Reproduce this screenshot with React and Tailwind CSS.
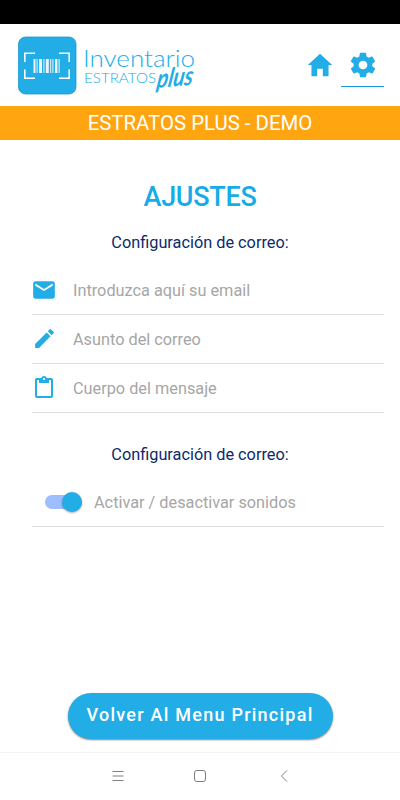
import { useState } from 'react';
import { IoMdHome, IoMdSettings } from 'react-icons/io';
import { MdContentPaste, MdEdit, MdEmail } from 'react-icons/md';

const FIELDS = [
  { name: 'email', placeholder: 'Introduzca aquí su email', icon: MdEmail, iconClass: 'h-[26px] w-[26px]' },
  { name: 'subject', placeholder: 'Asunto del correo', icon: MdEdit, iconClass: 'h-[25px] w-[25px]' },
  { name: 'body', placeholder: 'Cuerpo del mensaje', icon: MdContentPaste, iconClass: 'h-6 w-6' },
];

// x offset and width of each bar
const BARS = [
  [33.5, 2],
  [36.6, 1],
  [39, 3],
  [43.4, 1],
  [45.8, 3],
  [50.2, 1],
  [52.4, 1],
  [55, 2.4],
  [58.6, 1],
];

function Logo() {
  return (
    <svg width="200" height="80" viewBox="0 26 200 80" className="block overflow-visible">
      <rect x="18.5" y="37" width="57.5" height="57" rx="7" fill="#22ade6" stroke="#1c9bd0" strokeWidth="0.8" />
      <g fill="none" stroke="#fff" strokeWidth="1.6">
        <path d="M24.8 62V53.2H35" />
        <path d="M59 53.2H69.2V62" />
        <path d="M24.8 69.5V78.2H35" />
        <path d="M59 78.2H69.2V69.5" />
      </g>
      {BARS.map(([x, width]) => (
        <rect key={x} x={x} y="59" width={width} height="14" fill="#fff" fillOpacity="0.9" />
      ))}
      <g fill="#22ade6">
        <text x="83" y="66.5" fontSize="23" fontWeight="300" textLength="112" lengthAdjust="spacingAndGlyphs" className="font-['Lato',sans-serif]">
          Inventario
        </text>
        <text x="84" y="82.8" fontSize="13.2" fontWeight="300" textLength="72" lengthAdjust="spacingAndGlyphs" className="font-['Lato',sans-serif]">
          ESTRATOS
        </text>
        <text
          fontSize="26"
          fontWeight="700"
          fontStyle="italic"
          textLength="36"
          lengthAdjust="spacingAndGlyphs"
          transform="translate(156 88) rotate(-5) skewX(-14)"
          className="font-['Lato',sans-serif]"
        >
          plus
        </text>
      </g>
    </svg>
  );
}

function Field({ name, placeholder, icon: Icon, iconClass }) {
  return (
    <label className="flex h-[49px] items-center border-b border-[#dedede]">
      <span className="-ml-px flex w-[42px] shrink-0 pb-px">
        <span className="flex w-[26px] justify-center">
          <Icon className={`shrink-0 text-[#22ade6] ${iconClass}`} />
        </span>
      </span>
      <input
        name={name}
        placeholder={placeholder}
        className="w-full min-w-0 bg-transparent pt-0.5 text-[16.3px] text-[#555] outline-none placeholder:text-[#a6a6a6]"
      />
    </label>
  );
}

function SectionTitle({ children }) {
  return <h2 className="text-center text-[16.3px] leading-6 text-[#0b2a6b]">{children}</h2>;
}

export default function App() {
  const [sounds, setSounds] = useState(true);

  return (
    <div className="flex h-[800px] w-[400px] flex-col overflow-hidden bg-white font-['Roboto',sans-serif]">
      <div className="h-6 shrink-0 bg-black" />

      <header className="flex h-[82px] shrink-0 items-start justify-between pr-4 pt-0.5">
        <Logo />
        <nav className="flex">
          <button type="button" aria-label="Inicio" className="flex h-[61px] w-[43px] items-center justify-center pt-4">
            <IoMdHome className="h-[30px] w-[30px] text-[#22ade6]" />
          </button>
          <button
            type="button"
            aria-label="Ajustes"
            className="flex h-[61px] w-[43px] items-center justify-center border-b border-[#1b95dc] pt-[17px]"
          >
            <IoMdSettings className="h-[30px] w-[30px] text-[#22ade6]" />
          </button>
        </nav>
      </header>

      <div className="flex h-[34px] shrink-0 items-center justify-center bg-[#ffa510] text-[20.4px] text-white">
        ESTRATOS PLUS - DEMO
      </div>

      <main className="flex flex-1 flex-col">
        <h1 className="mt-10 text-center text-[27px] font-medium leading-[34px] tracking-[-0.3px] text-[#16ace8]">
          AJUSTES
        </h1>

        <section className="mt-[17px] pl-8 pr-4">
          <div className="-ml-4">
            <SectionTitle>Configuración de correo:</SectionTitle>
          </div>
          <div className="mt-[11px]">
            {FIELDS.map((field) => (
              <Field key={field.name} {...field} />
            ))}
          </div>
        </section>

        <section className="mt-[30px] pl-8 pr-4">
          <div className="-ml-4">
            <SectionTitle>Configuración de correo:</SectionTitle>
          </div>
          <div className="mt-[11px] flex h-[49px] items-center border-b border-[#dedede] pl-[13px]">
            <button
              type="button"
              role="switch"
              aria-checked={sounds}
              aria-label="Sonidos"
              onClick={() => setSounds(!sounds)}
              className={`flex h-3.5 w-[37px] items-center rounded-full ${sounds ? 'justify-end bg-[#9dbdff]' : 'justify-start bg-gray-300'}`}
            >
              <span className="h-5 w-5 rounded-full bg-[#22ade6] shadow-[0_1px_2px_rgba(0,0,0,0.35)]" />
            </button>
            <span className="ml-3 pt-0.5 text-[16.3px] text-[#a6a6a6]">Activar / desactivar sonidos</span>
          </div>
        </section>

        <button
          type="button"
          className="mx-auto mb-[13px] mt-auto h-[46px] w-[265px] rounded-full bg-[#22ade6] pb-[3px] text-[18px] font-medium tracking-[1.25px] text-white shadow-[0_1px_2px_rgba(0,0,0,0.5)]"
        >
          Volver Al Menu Principal
        </button>
      </main>

      <footer className="flex h-12 shrink-0 items-center justify-center border-t border-[#f3f3f3] pb-0.5">
        <svg width="180" height="16" viewBox="0 0 180 16" fill="none" stroke="#808080" strokeWidth="1">
          <path d="M2.5 3.5h11M2.5 8h11M2.5 12.5h11" />
          <rect x="84.5" y="2.5" width="11" height="11" rx="2.5" />
          <path d="M177 2.5L171.5 8l5.5 5.5" />
        </svg>
      </footer>
    </div>
  );
}
